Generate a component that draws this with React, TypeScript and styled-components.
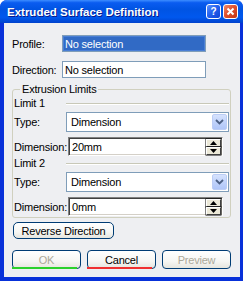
import React from 'react';
import styled, { createGlobalStyle } from 'styled-components';

const Global = createGlobalStyle`
  html, body { margin: 0; padding: 0; background: #ffffff; }
  body { font-family: "Liberation Sans", Arial, sans-serif; font-size: 11px; color: #000; letter-spacing: -0.2px; }
  * { box-sizing: border-box; }
`;

const Window = styled.div`
  width: 243px;
  height: 281px;
  display: flex;
  flex-direction: column;
  background: #0831d9;
  border-radius: 7px 7px 0 0;
  overflow: hidden;
`;

const TitleBar = styled.div`
  height: 23px;
  flex: none;
  display: flex;
  align-items: center;
  padding: 0 5px 0 7px;
  background: linear-gradient(
    to bottom,
    #3d8dff 0%,
    #0a5cf0 12%,
    #0054e3 40%,
    #0058ee 75%,
    #0042cc 100%
  );
`;

const Title = styled.div`
  flex: 1;
  color: #ffffff;
  font-weight: bold;
  font-size: 11.5px;
  letter-spacing: 0;
  text-shadow: 1px 1px 0 #0a1a8a;
  white-space: nowrap;
`;

const CaptionButtons = styled.div`
  display: flex;
  gap: 2px;
`;

const CaptionButton = styled.div<{ $kind: 'help' | 'close' }>`
  width: 15px;
  height: 15px;
  border: 1px solid #ffffff;
  border-radius: 3px;
  display: flex;
  align-items: center;
  justify-content: center;
  color: #ffffff;
  font-weight: bold;
  font-size: 10px;
  background: ${(p) =>
    p.$kind === 'help'
      ? 'linear-gradient(135deg, #5c93ff 0%, #2562ee 45%, #1043d6 100%)'
      : 'linear-gradient(135deg, #f08a6c 0%, #e0512f 45%, #c23513 100%)'};
`;

const Frame = styled.div`
  flex: 1;
  display: flex;
  padding: 0 4px 4px 4px;
`;

const Body = styled.div`
  flex: 1;
  background: #eeeff2;
  display: flex;
  flex-direction: column;
  padding: 12px 9px 0 8px;
`;

const FieldRow = styled.div<{ $top: number }>`
  display: flex;
  align-items: center;
  margin-top: ${(p) => p.$top}px;
`;

const RowLabel = styled.div`
  width: 50px;
  white-space: nowrap;
`;

const SelectField = styled.div<{ $selected?: boolean }>`
  width: 144px;
  height: 17px;
  border: 1px solid #7f9db9;
  padding: 0 2px;
  display: flex;
  align-items: center;
  background: ${(p) => (p.$selected ? '#316ac5' : '#ffffff')};
  color: ${(p) => (p.$selected ? '#ffffff' : '#000000')};
  box-shadow: ${(p) => (p.$selected ? 'inset 0 0 0 1px #4a7fd6' : 'none')};
`;

const Group = styled.div`
  position: relative;
  margin-top: 11px;
  border: 1px solid #d0d0bf;
  border-radius: 3px;
  padding: 6px 1px 1px 1px;
  display: flex;
  flex-direction: column;
`;

const Legend = styled.div`
  position: absolute;
  top: -7px;
  left: 7px;
  padding: 0 2px;
  background: #eeeff2;
  line-height: 13px;
`;

const Section = styled.div`
  display: grid;
  grid-template-columns: 52px 1fr;
  align-items: center;
`;

const SectionHead = styled.div`
  white-space: nowrap;
  line-height: 14px;
  height: 14px;
`;

const Separator = styled.div`
  height: 1px;
  margin-top: 1px;
  background: #c8c8b8;
  box-shadow: 0 1px 0 #ffffff;
`;

const GridLabel = styled.div<{ $top: number }>`
  white-space: nowrap;
  margin-top: ${(p) => p.$top}px;
`;

const Combo = styled.div`
  margin-top: 2px;
  height: 20px;
  border: 1px solid #7f9db9;
  background: #ffffff;
  display: flex;
  align-items: center;
  padding: 0 1px 0 4px;
`;

const ComboText = styled.div`
  flex: 1;
`;

const DropButton = styled.div`
  width: 15px;
  height: 16px;
  border-radius: 2px;
  background: linear-gradient(to bottom, #d6e2fd 0%, #c1d3fb 50%, #b0c6f8 100%);
  border: 1px solid #bccdf5;
  display: flex;
  align-items: center;
  justify-content: center;
`;

const Spin = styled.div`
  margin: 5px 6px 0 2px;
  height: 19px;
  background: #ffffff;
  border-top: 1px solid #808080;
  border-left: 1px solid #808080;
  border-right: 1px solid #ffffff;
  border-bottom: 1px solid #ffffff;
  box-shadow: inset 1px 1px 0 #404040, inset -1px -1px 0 #d4d0c8;
  display: flex;
  align-items: center;
  padding: 0 1px 0 3px;
`;

const SpinText = styled.div`
  flex: 1;
`;

const SpinButtons = styled.div`
  display: flex;
  flex-direction: column;
`;

const SpinButton = styled.div`
  width: 15px;
  height: 8px;
  background: #ece9d8;
  border-top: 1px solid #ffffff;
  border-left: 1px solid #ffffff;
  border-right: 1px solid #404040;
  border-bottom: 1px solid #404040;
  box-shadow: 0 0 0 0.5px #000;
  display: flex;
  align-items: center;
  justify-content: center;
`;

const PushButton = styled.div<{ $width: number; $line?: string; $disabled?: boolean }>`
  position: relative;
  width: ${(p) => p.$width}px;
  height: 19px;
  border: 1px solid #003c74;
  border-radius: 4px;
  background: linear-gradient(to bottom, #ffffff 0%, #f6f6f3 60%, #e6e5de 100%);
  display: flex;
  align-items: center;
  justify-content: center;
  color: ${(p) => (p.$disabled ? '#aca899' : '#000000')};
  &::after {
    content: '';
    display: ${(p) => (p.$line ? 'block' : 'none')};
    position: absolute;
    left: -1px;
    right: 3px;
    bottom: -1px;
    height: 2px;
    background: ${(p) => p.$line || 'transparent'};
  }
`;

const ReverseButton = styled(PushButton)`
  height: 17px;
  margin: 4px 0 0 1px;
  border-radius: 5px;
`;

const ButtonRow = styled.div`
  display: flex;
  gap: 6px;
  margin-top: 11px;
`;

const Chevron = () => (
  <svg width="9" height="6" viewBox="0 0 9 6">
    <path d="M1 1 L4.5 4.5 L8 1" fill="none" stroke="#4d6185" strokeWidth="1.8" />
  </svg>
);

const Triangle = ({ up }: { up?: boolean }) => (
  <svg width="7" height="4" viewBox="0 0 7 4">
    <path d={up ? 'M0 4 L3.5 0 L7 4 Z' : 'M0 0 L3.5 4 L7 0 Z'} fill="#000" />
  </svg>
);

const CloseGlyph = () => (
  <svg width="9" height="9" viewBox="0 0 9 9">
    <path d="M1.5 1.5 L7.5 7.5 M7.5 1.5 L1.5 7.5" stroke="#fff" strokeWidth="2" />
  </svg>
);

const Limit = ({ name, value }: { name: string; value: string }) => (
  <Section>
    <SectionHead>{name}</SectionHead>
    <Separator />
    <GridLabel $top={2}>Type:</GridLabel>
    <Combo>
      <ComboText>Dimension</ComboText>
      <DropButton>
        <Chevron />
      </DropButton>
    </Combo>
    <GridLabel $top={5}>Dimension:</GridLabel>
    <Spin>
      <SpinText>{value}</SpinText>
      <SpinButtons>
        <SpinButton>
          <Triangle up />
        </SpinButton>
        <SpinButton>
          <Triangle />
        </SpinButton>
      </SpinButtons>
    </Spin>
  </Section>
);

export default function App() {
  return (
    <>
      <Global />
      <Window>
        <TitleBar>
          <Title>Extruded Surface Definition</Title>
          <CaptionButtons>
            <CaptionButton $kind="help">?</CaptionButton>
            <CaptionButton $kind="close">
              <CloseGlyph />
            </CaptionButton>
          </CaptionButtons>
        </TitleBar>
        <Frame>
          <Body>
            <FieldRow $top={0}>
              <RowLabel>Profile:</RowLabel>
              <SelectField $selected>No selection</SelectField>
            </FieldRow>
            <FieldRow $top={9}>
              <RowLabel>Direction:</RowLabel>
              <SelectField>No selection</SelectField>
            </FieldRow>
            <Group>
              <Legend>Extrusion Limits</Legend>
              <Limit name="Limit 1" value="20mm" />
              <Limit name="Limit 2" value="0mm" />
            </Group>
            <ReverseButton $width={101}>Reverse Direction</ReverseButton>
            <ButtonRow>
              <PushButton $width={69} $line="#2bd12b" $disabled>
                OK
              </PushButton>
              <PushButton $width={69} $line="#f03030">
                Cancel
              </PushButton>
              <PushButton $width={69} $disabled>
                Preview
              </PushButton>
            </ButtonRow>
          </Body>
        </Frame>
      </Window>
    </>
  );
}
